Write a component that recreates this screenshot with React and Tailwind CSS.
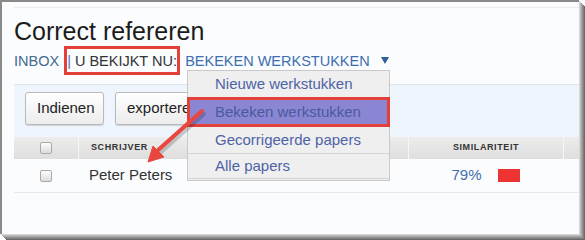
import React from "react";

const Checkbox = () => (
  <span className="block h-[12px] w-[12px] rounded-[2px] border border-[#a9a9a9] bg-gradient-to-b from-[#fdfdfd] to-[#dcdcdc]" />
);

const Button = ({ children, className = "" }) => (
  <button
    className={`h-[33px] rounded-[3px] border border-[#b9b9b9] bg-gradient-to-b from-white to-[#ececec] px-[11px] text-[15px] text-[#222] shadow-[0_1px_1px_rgba(0,0,0,0.15)] ${className}`}
  >
    {children}
  </button>
);

const menuItems = [
  { label: "Nieuwe werkstukken" },
  { label: "Bekeken werkstukken", active: true },
  { label: "Gecorrigeerde papers" },
  { label: "Alle papers", divider: true },
];

const App = () => {
  return (
    <div className="relative h-[240px] w-[585px] overflow-hidden bg-white font-['Liberation_Sans',Arial,sans-serif]">
      <div className="h-[234px] w-[579px] border-l-2 border-t-2 border-[#8a8a8a] bg-[#fbfcfe] shadow-[1px_1px_0_#d6d6d6,2px_2px_0_#bcbcbc,3px_3px_0_#a6a6a6,4px_4px_0_#939393,5px_5px_0_#7e7e7e,6px_6px_0_#6a6a6a]">
        <div className="pl-[12px]">
          <div className="mt-[5px] h-px bg-[#ececf0]" />
          <h1 className="mt-[8px] text-[25px] leading-[30px] text-[#1c1c1c]">Correct refereren</h1>

          <div className="flex h-[29px] items-center text-[14.5px] leading-[20px]">
            <span className="text-[#44698f]">INBOX</span>
            <div className="ml-[5px] flex h-[29px] w-[116px] shrink-0 items-center overflow-visible whitespace-nowrap border-[3px] border-[#e3403a]">
              <span className="text-[#4a78b0]">|</span>
              <span className="ml-[4px] text-[#333]">U BEKIJKT NU:</span>
            </div>
            <span className="ml-[5px] text-[#3b6fb0]">BEKEKEN WERKSTUKKEN</span>
            <svg className="ml-[11px]" width="8" height="7" viewBox="0 0 8 7">
              <path d="M0 0 L8 0 L4 7 Z" fill="#2f5e98" />
            </svg>
          </div>

          <div className="mt-[9px] h-[53px] border-t border-[#dfe5ec] bg-[#eef5fc] pl-[11px] pt-[7px]">
            <div className="flex gap-[11px]">
              <Button className="w-[79px]">Indienen</Button>
              <Button className="w-[110px] text-left">exporteren</Button>
            </div>
          </div>

          <div className="flex h-[22px] bg-gradient-to-b from-[#ececec] to-[#dedede] text-[9px] font-bold tracking-[0.6px] text-[#333]">
            <div className="flex w-[64px] items-center justify-center">
              <Checkbox />
            </div>
            <div className="w-px bg-[#f6f6f6]" />
            <div className="flex w-[329px] items-center pl-[12px]">SCHRIJVER</div>
            <div className="w-px bg-[#f6f6f6]" />
            <div className="flex w-[154px] items-center justify-center">SIMILARITEIT</div>
            <div className="w-px bg-[#f6f6f6]" />
            <div className="flex-1" />
          </div>

          <div className="flex h-[34px] items-center border-b border-[#e6e8eb] text-[15px]">
            <div className="flex w-[64px] justify-center">
              <Checkbox />
            </div>
            <div className="w-[330px] pl-[11px] text-[#333]">Peter Peters</div>
            <div className="flex w-[155px] items-center justify-center gap-[16px]">
              <span className="text-[#3e6eab]">79%</span>
              <span className="h-[13px] w-[22px] bg-[#ee3333]" />
            </div>
          </div>
        </div>
      </div>

      <div className="absolute left-[187px] top-[70px] w-[203px] border border-[#c9c9c9] bg-[#efefef] pb-[1px] text-[15px] leading-[20px] text-[#4d63a6]">
        {menuItems.map((item) =>
          item.active ? (
            <div
              key={item.label}
              className="-mx-px flex h-[30px] items-center border-[3px] border-[#e3403a] bg-[#8a86d3] pl-[25px] text-[#4a5a9c]"
            >
              {item.label}
            </div>
          ) : (
            <div
              key={item.label}
              className={`flex h-[26px] items-center pl-[27px] ${item.divider ? "border-y border-[#d4d4d4]" : ""}`}
            >
              {item.label}
            </div>
          )
        )}
      </div>

      <svg className="pointer-events-none absolute left-0 top-0" width="585" height="240" viewBox="0 0 585 240">
        <line x1="203" y1="112" x2="158" y2="152" stroke="rgba(0,0,0,0.18)" strokeWidth="4" strokeLinecap="round" transform="translate(1 2)" />
        <line x1="202" y1="111" x2="157" y2="151" stroke="#e8463e" strokeWidth="4" strokeLinecap="round" />
        <path d="M148 162 L164 157 L153 146 Z" fill="#e8463e" stroke="#e8463e" strokeWidth="1" strokeLinejoin="round" />
      </svg>
    </div>
  );
};

export default App;
